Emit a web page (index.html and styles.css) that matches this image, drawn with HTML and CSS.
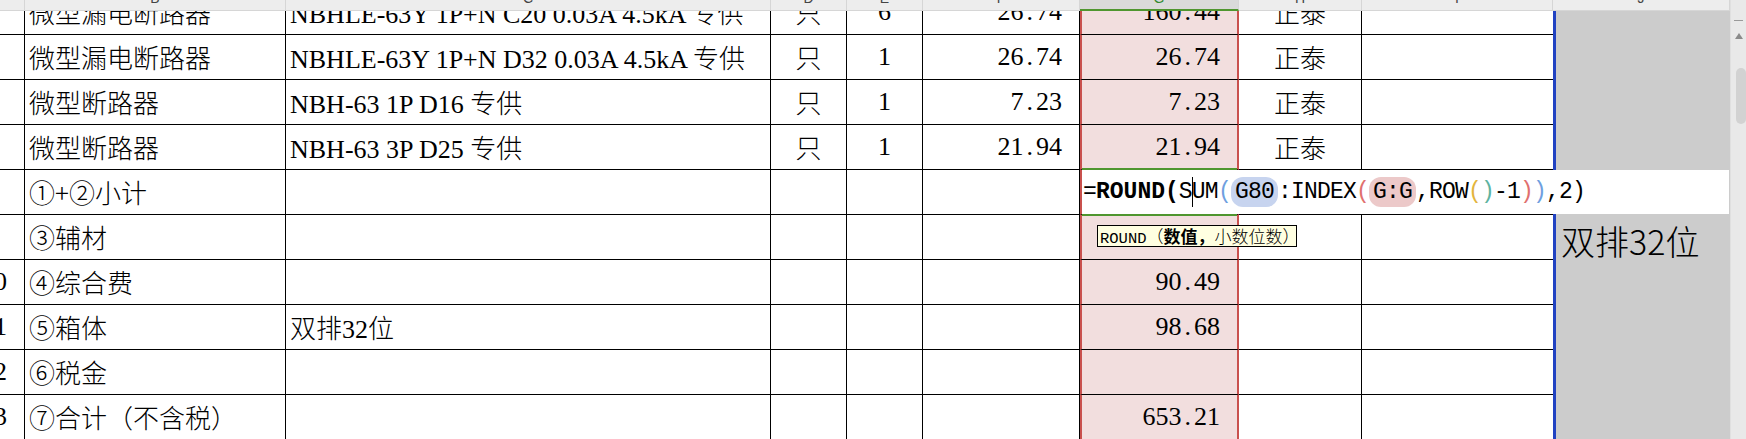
FILE: index.html
```html
<!DOCTYPE html>
<html lang="zh-CN">
<head>
<meta charset="utf-8">
<title>Sheet</title>
<link rel="stylesheet" href="styles.css">
</head>
<body>
<div class="app">
  <div class="sheet">
    <div class="colheads">
      <div class="ch"><span></span></div>
      <div class="ch"><span>B</span></div>
      <div class="ch"><span>C</span></div>
      <div class="ch"><span>D</span></div>
      <div class="ch"><span>E</span></div>
      <div class="ch"><span>F</span></div>
      <div class="ch sel"><span>G</span></div>
      <div class="ch"><span>H</span></div>
      <div class="ch"><span>I</span></div>
      <div class="ch"><span>J</span></div>
    </div>
    <div class="viewport">
      <div class="grid">
        <div class="row">
          <div class="c a"></div>
          <div class="c">微型漏电断路器</div>
          <div class="c"><span class="en">NBHLE-63Y 1P+N C20 0.03A 4.5kA </span>专供</div>
          <div class="c ctr">只</div>
          <div class="c ctr en">6</div>
          <div class="c r en">26<span class="pt">.</span>74</div>
          <div class="c g r en">160<span class="pt">.</span>44</div>
          <div class="c ctr">正泰</div>
          <div class="c i"></div>
          <div class="c j"></div>
        </div>
        <div class="row">
          <div class="c a"></div>
          <div class="c">微型漏电断路器</div>
          <div class="c"><span class="en">NBHLE-63Y 1P+N D32 0.03A 4.5kA </span>专供</div>
          <div class="c ctr">只</div>
          <div class="c ctr en">1</div>
          <div class="c r en">26<span class="pt">.</span>74</div>
          <div class="c g r en">26<span class="pt">.</span>74</div>
          <div class="c ctr">正泰</div>
          <div class="c i"></div>
          <div class="c j"></div>
        </div>
        <div class="row">
          <div class="c a"></div>
          <div class="c">微型断路器</div>
          <div class="c"><span class="en">NBH-63 1P D16 </span>专供</div>
          <div class="c ctr">只</div>
          <div class="c ctr en">1</div>
          <div class="c r en">7<span class="pt">.</span>23</div>
          <div class="c g r en">7<span class="pt">.</span>23</div>
          <div class="c ctr">正泰</div>
          <div class="c i"></div>
          <div class="c j"></div>
        </div>
        <div class="row">
          <div class="c a"></div>
          <div class="c">微型断路器</div>
          <div class="c"><span class="en">NBH-63 3P D25 </span>专供</div>
          <div class="c ctr">只</div>
          <div class="c ctr en">1</div>
          <div class="c r en">21<span class="pt">.</span>94</div>
          <div class="c g r en">21<span class="pt">.</span>94</div>
          <div class="c ctr">正泰</div>
          <div class="c i"></div>
          <div class="c j"></div>
        </div>
        <div class="row">
          <div class="c a"></div>
          <div class="c">①+②小计</div>
          <div class="c"></div>
          <div class="c"></div>
          <div class="c"></div>
          <div class="c"></div>
          <div class="c g"></div>
          <div class="c"></div>
          <div class="c i"></div>
          <div class="c j"></div>
        </div>
        <div class="row">
          <div class="c a"></div>
          <div class="c">③辅材</div>
          <div class="c"></div>
          <div class="c"></div>
          <div class="c"></div>
          <div class="c"></div>
          <div class="c g"></div>
          <div class="c"></div>
          <div class="c i"></div>
          <div class="c j big">双排32位</div>
        </div>
        <div class="row">
          <div class="c a en">10</div>
          <div class="c">④综合费</div>
          <div class="c"></div>
          <div class="c"></div>
          <div class="c"></div>
          <div class="c"></div>
          <div class="c g r en">90<span class="pt">.</span>49</div>
          <div class="c"></div>
          <div class="c i"></div>
          <div class="c j"></div>
        </div>
        <div class="row">
          <div class="c a en">11</div>
          <div class="c">⑤箱体</div>
          <div class="c">双排<span class="en">32</span>位</div>
          <div class="c"></div>
          <div class="c"></div>
          <div class="c"></div>
          <div class="c g r en">98<span class="pt">.</span>68</div>
          <div class="c"></div>
          <div class="c i"></div>
          <div class="c j"></div>
        </div>
        <div class="row">
          <div class="c a en">12</div>
          <div class="c">⑥税金</div>
          <div class="c"></div>
          <div class="c"></div>
          <div class="c"></div>
          <div class="c"></div>
          <div class="c g"></div>
          <div class="c"></div>
          <div class="c i"></div>
          <div class="c j"></div>
        </div>
        <div class="row">
          <div class="c a en">13</div>
          <div class="c">⑦合计（不含税）</div>
          <div class="c"></div>
          <div class="c"></div>
          <div class="c"></div>
          <div class="c"></div>
          <div class="c g r en">653<span class="pt">.</span>21</div>
          <div class="c"></div>
          <div class="c i"></div>
          <div class="c j"></div>
        </div>
      </div>

      <div class="active-cell"></div>
      <div class="editor">=<b>ROUND(</b>S<i class="caret"></i>UM<span class="p1">(</span><span class="pill blue">G80</span>:INDEX<span class="p2">(</span><span class="pill red">G:G</span>,ROW<span class="p3">(</span><span class="p4">)</span>-1<span class="p2">)</span><span class="p1">)</span>,2)</div>
      <div class="tip"><span class="mono">ROUND</span>（<b>数值，</b>小数位数）</div>
    </div>
  </div>
  <div class="vscroll">
    <div class="vs-dash"></div>
    <div class="vs-up"></div>
    <div class="vs-thumb"></div>
  </div>
</div>
</body>
</html>
```

FILE: styles.css
```css
:root {
  --cols: 25px 261px 485px 76px 76px 157px 159px 123px 191px 177px;
}
* { box-sizing: border-box; }
html, body { margin: 0; padding: 0; }
body {
  width: 1746px;
  height: 439px;
  overflow: hidden;
  background: #fff;
}
.app {
  display: flex;
  width: 1746px;
  height: 439px;
}
.sheet {
  width: 1730px;
  display: flex;
  flex-direction: column;
}

/* column header strip (scrolled, only the bottoms of letters show) */
.colheads {
  display: grid;
  grid-template-columns: var(--cols);
  height: 11px;
  background: #ededed;
  overflow: hidden;
}
.ch {
  border-right: 1px solid #d6d6d6;
  border-bottom: 1px solid #d6d6d6;
  text-align: center;
  font: 14px "Liberation Sans", sans-serif;
  color: #444;
  overflow: hidden;
}
.ch span {
  display: block;
  line-height: 14px;
  margin-top: -9px;
}
.ch.sel {
  background: #dadada;
  border-bottom: 2px solid #4f962f;
  color: #2f8a2f;
}

/* sheet body */
.viewport {
  flex: 1;
  position: relative;
  overflow: hidden;
}
.grid {
  margin-top: -21px;
}
.row {
  display: grid;
  grid-template-columns: var(--cols);
  height: 45px;
}
.c {
  height: 45px;
  border-right: 1px solid #000;
  border-bottom: 1px solid #000;
  padding: 0 4px;
  line-height: 44px;
  white-space: nowrap;
  overflow: hidden;
  font-family: "Noto Sans CJK SC", sans-serif;
  font-size: 26px;
  font-weight: 300;
  color: #000;
}
.en {
  font-family: "Liberation Serif", serif;
  font-size: 26px;
  font-weight: 400;
}
.pt { padding: 0 3px; }
.ctr { text-align: center; }
.r { text-align: right; padding-right: 17px; }
.c.a {
  display: flex;
  align-items: center;
  justify-content: flex-end;
  padding: 0 17px 0 0;
}
.c.g {
  background: #f2dede;
  border-left: 2px solid #c9514e;
  border-right: 2px solid #c9514e;
}
.c.i { border-right: none; }
.c.j {
  background: #cccccc;
  border-right: none;
  border-bottom: none;
  border-left: 3px solid #2142c2;
}
.c.big {
  font-size: 34px;
  line-height: 34px;
  padding: 9px 0 0 5px;
}

/* active cell top/bottom border (green) */
.active-cell {
  position: absolute;
  left: 1082px;
  top: 157px;
  width: 155px;
  height: 48px;
  border-top: 2px solid #4f962f;
  border-bottom: 2px solid #4f962f;
}

/* in-cell formula editor */
.editor {
  position: absolute;
  left: 1082px;
  top: 159px;
  width: 647px;
  height: 44px;
  background: #fff;
  padding-left: 1px;
  line-height: 44px;
  white-space: nowrap;
  font-family: "Liberation Mono", monospace;
  font-size: 23px;
  letter-spacing: -0.8px;
  color: #000;
}
.editor b { font-weight: 700; letter-spacing: 0px; }
.caret {
  display: inline-block;
  width: 1px;
  height: 30px;
  background: #000;
  vertical-align: middle;
  margin-right: -1px;
}
.pill {
  padding: 2px 4px;
  border-radius: 12px;
}
.pill.blue { background: #c7d4ef; }
.pill.red { background: #ecc9c9; }
.p1 { color: #6f9fe0; }
.p2 { color: #e0706e; }
.p3 { color: #e3b43c; }
.p4 { color: #5db3a0; }

/* function tooltip */
.tip {
  position: absolute;
  left: 1097px;
  top: 214px;
  width: 200px;
  height: 22px;
  border: 1px solid #000;
  background: #ffffe1;
  padding-left: 2px;
  line-height: 20px;
  white-space: nowrap;
  overflow: hidden;
  font-family: "Noto Sans CJK SC", sans-serif;
  font-size: 17px;
  font-weight: 300;
  color: #000;
}
.tip .mono {
  font-family: "Liberation Mono", monospace;
  font-size: 15.5px;
  font-weight: 400;
}
.tip b { font-weight: 700; }

/* vertical scrollbar */
.vscroll {
  width: 16px;
  height: 439px;
  background: #e9e9e9;
  border-left: 1px solid #e0e0e0;
  display: flex;
  flex-direction: column;
  align-items: center;
}
.vs-dash {
  width: 9px;
  height: 1px;
  background: #9a9a9a;
  margin-top: 20px;
}
.vs-up {
  margin-top: 12px;
  width: 0;
  height: 0;
  border-left: 4px solid transparent;
  border-right: 4px solid transparent;
  border-bottom: 6px solid #8a8a8a;
}
.vs-thumb {
  margin-top: 29px;
  margin-left: 4px;
  width: 10px;
  height: 56px;
  border-radius: 5px;
  background: #d2d2d2;
}
```
